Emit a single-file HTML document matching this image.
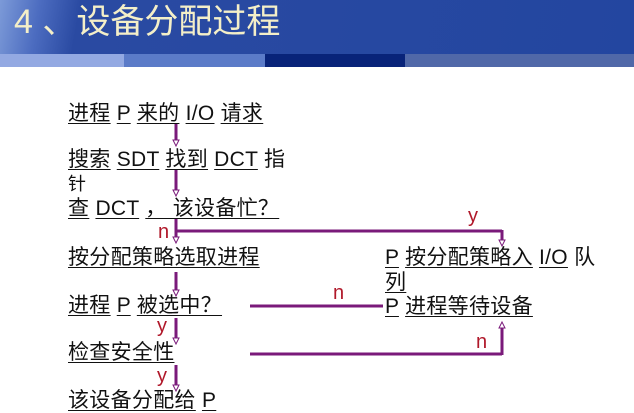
<!DOCTYPE html>
<html><head><meta charset="utf-8"><style>
body{margin:0;width:634px;height:413px;overflow:hidden;background:#fff;position:relative;font-family:"Liberation Sans","Noto Sans CJK SC",sans-serif}
.hd{position:absolute;left:0;top:0;width:634px;height:54px;background:linear-gradient(100deg,#7c9ad8 0,#4c6cc0 40px,#2a4aa2 80px,#2346a0 100%)}
.t{position:absolute;left:14px;top:-6px;font-size:34px;color:#f4efc8;white-space:nowrap}
.s{position:absolute;top:54px;height:13px}
.l{position:absolute;font-size:21px;letter-spacing:0.3px;color:#111;white-space:nowrap;line-height:24px}
.l u{text-decoration:underline;text-decoration-thickness:1px;text-underline-offset:3px}
.r{position:absolute;font-size:20px;color:#b0182a;line-height:20px}
</style></head><body>
<div class="hd"><div class="t">4 、设备分配过程</div></div>
<div class="s" style="left:0;width:124px;background:#93a9e2"></div>
<div class="s" style="left:124px;width:141px;background:#5b7bc8"></div>
<div class="s" style="left:265px;width:140px;background:#082379"></div>
<div class="s" style="left:405px;width:229px;background:#5068a8"></div>

<div class="l" style="left:68px;top:102px"><u>进程</u> <u>P</u> <u>来的</u> <u>I/O</u> <u>请求</u></div>
<div class="l" style="left:68px;top:148px"><u>搜索</u> <u>SDT</u> <u>找到</u> <u>DCT</u> 指</div>
<div class="l" style="left:68px;top:172px;font-size:18px">针</div>
<div class="l" style="left:68px;top:197px"><u>查</u> <u>DCT</u> <u>， 该设备忙？ </u></div>
<div class="l" style="left:68px;top:246px"><u>按分配策略选取进程</u></div>
<div class="l" style="left:68px;top:294px"><u>进程</u> <u>P</u> <u>被选中？ </u></div>
<div class="l" style="left:68px;top:341px"><u>检查安全性</u></div>
<div class="l" style="left:68px;top:389px"><u>该设备分配给</u> <u>P</u></div>
<div class="l" style="left:385px;top:246px"><u>P</u> <u>按分配策略入</u> <u>I/O</u> 队</div>
<div class="l" style="left:385px;top:271px"><u>列</u></div>
<div class="l" style="left:385px;top:295px"><u>P</u> <u>进程等待设备</u></div>

<svg style="position:absolute;left:0;top:0" width="634" height="413">
<g stroke="#7a1a7a" stroke-width="3" fill="none">
<line x1="176" y1="124" x2="176" y2="140"/>
<line x1="176" y1="170" x2="176" y2="190"/>
<line x1="176" y1="219" x2="176" y2="237"/>
<line x1="176" y1="231" x2="502" y2="231"/>
<line x1="502" y1="230" x2="502" y2="240"/>
<line x1="176" y1="272" x2="176" y2="290"/>
<line x1="176" y1="318" x2="176" y2="338"/>
<line x1="176" y1="365" x2="176" y2="385"/>
<line x1="250" y1="306" x2="383" y2="306"/>
<line x1="250" y1="354" x2="502" y2="354"/>
<line x1="502" y1="355" x2="502" y2="328"/>
</g>
<g fill="#fff" stroke="#7a1a7a" stroke-width="1">
<path d="M173 140 L179 140 L176 146Z"/>
<path d="M173 190 L179 190 L176 196Z"/>
<path d="M173 237 L179 237 L176 243Z"/>
<path d="M499 240 L505 240 L502 246Z"/>
<path d="M173 290 L179 290 L176 296Z"/>
<path d="M173 338 L179 338 L176 344Z"/>
<path d="M173 385 L179 385 L176 391Z"/>
<path d="M499 328 L505 328 L502 322Z"/>
</g>
</svg>
<div class="r" style="left:468px;top:206px">y</div>
<div class="r" style="left:158px;top:222px">n</div>
<div class="r" style="left:333px;top:283px">n</div>
<div class="r" style="left:157px;top:316px">y</div>
<div class="r" style="left:476px;top:332px">n</div>
<div class="r" style="left:157px;top:366px">y</div>
</body></html>
